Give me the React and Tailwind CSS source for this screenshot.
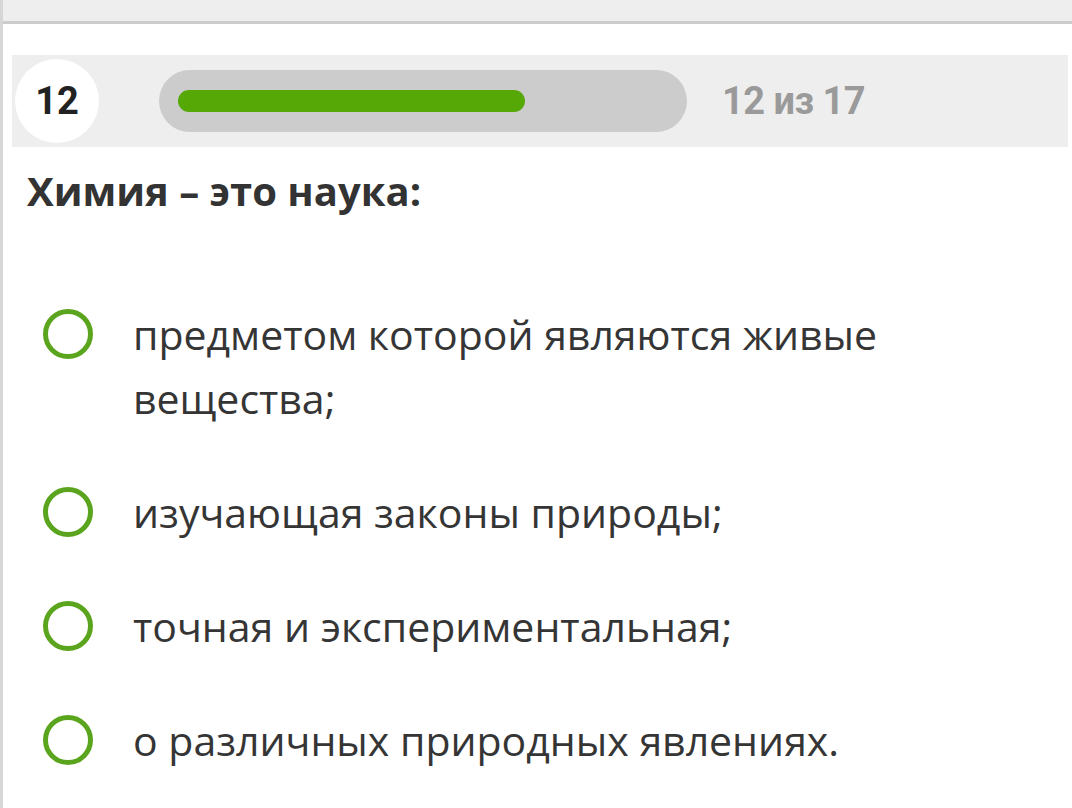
import React from "react";

const options = [
  "предметом которой являются живые вещества;",
  "изучающая законы природы;",
  "точная и экспериментальная;",
  "о различных природных явлениях.",
];

function Radio() {
  return <div className="w-[50px] h-[50px] shrink-0 rounded-full border-[5px] border-[#5ba51e] mt-[7px]" />;
}

export default function App() {
  return (
    <div className="min-h-screen w-full bg-white border-l-[3px] border-[#d6d6d6] font-['Open_Sans',sans-serif]">
      <div className="h-[24px] bg-[#eeeeee] border-b-[3px] border-[#cccccc]" />

      <div className="mt-[31px] ml-[9px] mr-[4px] h-[92px] bg-[#eeeeee] flex items-center">
        <div className="ml-[3px] w-[84px] h-[84px] rounded-full bg-white flex items-center justify-center font-['Roboto',sans-serif] font-bold text-[38px] text-[#222]">
          12
        </div>
        <div className="ml-[60px] w-[528px] h-[62px] rounded-full bg-[#cccccc] flex items-center pl-[19px]">
          <div className="w-[347px] h-[22px] rounded-full bg-[#55a805]" />
        </div>
        <div className="ml-[35px] font-['Roboto',sans-serif] font-bold text-[38px] text-[#9a9a9a] tracking-[-0.5px]">
          12 из 17
        </div>
      </div>

      <h1 className="mt-[18px] ml-[24px] text-[40px] leading-[52px] font-bold text-[#333333]">
        Химия – это наука:
      </h1>

      <div className="mt-[85px] ml-[40px] flex flex-col gap-[50px]">
        {options.map((o) => (
          <div key={o} className="flex items-start">
            <Radio />
            <div className="ml-[40px] w-[790px] text-[41px] leading-[64px] text-[#353535]">{o}</div>
          </div>
        ))}
      </div>
    </div>
  );
}
